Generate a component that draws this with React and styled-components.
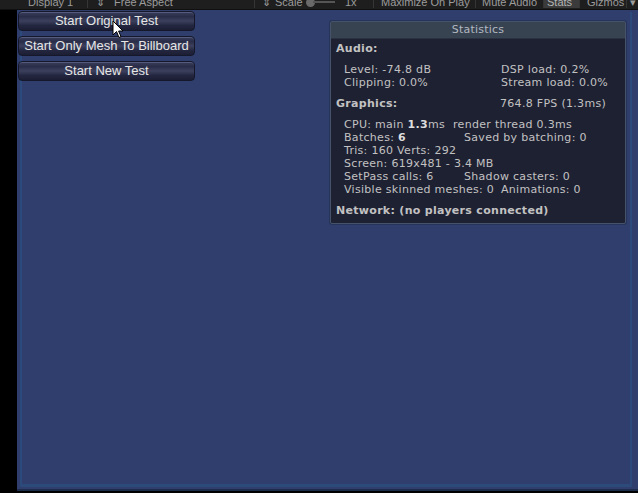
import React from 'react';
import styled, { createGlobalStyle } from 'styled-components';

const GlobalStyle = createGlobalStyle`
  html, body {
    margin: 0;
    padding: 0;
    background: #000;
    width: 638px;
    height: 493px;
    overflow: hidden;
  }
`;

const Screen = styled.div`
  display: flex;
  flex-direction: column;
  width: 638px;
  height: 493px;
  background: #000;
`;

const TopBar = styled.div`
  height: 9px;
  overflow: hidden;
  background: #1e1e1e;
  border-bottom: 1px solid #101010;
  display: flex;
  padding-left: 17px;
  font-family: "Liberation Sans", Arial, sans-serif;
  font-size: 11px;
  color: #9c9c9c;
`;

const ToolItem = styled.div`
  flex: none;
  width: ${p => p.w}px;
  height: 12px;
  margin-top: -4px;
  line-height: 12px;
  padding-left: ${p => p.pad || 0}px;
  box-sizing: border-box;
  white-space: nowrap;
  background: ${p => (p.active ? '#3b3b3b' : 'transparent')};
  color: ${p => (p.active ? '#b4b4b4' : '#9c9c9c')};
  border-right: ${p => (p.sep ? '1px solid #353535' : 'none')};
  display: flex;
  align-items: center;
`;

const Knob = styled.span`
  display: inline-block;
  width: 9px;
  height: 9px;
  border-radius: 50%;
  background: #6a6a6a;
  margin-right: -2px;
`;

const Track = styled.span`
  display: inline-block;
  width: 22px;
  height: 2px;
  background: #555;
`;

const Viewport = styled.div`
  position: relative;
  flex: 1;
  margin-left: 17px;
  margin-bottom: 2px;
  background: #2f3e6d;
  display: flex;
  align-items: flex-start;
  padding: 1px 12px 0 1px;

  &::before {
    content: '';
    position: absolute;
    left: 3px;
    right: 6px;
    top: 2px;
    bottom: 4px;
    border-left: 2px solid #2d4a7c;
    border-right: 2px solid #2d4a7c;
    border-bottom: 3px solid #2c4a7a;
    pointer-events: none;
  }
  &::after {
    content: '';
    position: absolute;
    left: 0;
    right: 0;
    bottom: 0;
    height: 2px;
    background: #1d2c4a;
  }
`;

const ButtonColumn = styled.div`
  position: relative;
  z-index: 1;
  display: flex;
  flex-direction: column;
  gap: 5px;
  width: 177px;
`;

const TestButton = styled.button`
  height: 20px;
  width: 100%;
  padding: 0;
  border: 1px solid #15182a;
  border-radius: 4px;
  background: linear-gradient(
    #3a3e5c 0%,
    #2a2d48 25%,
    #3c405d 50%,
    #23263f 75%,
    #1b1e33 100%
  );
  box-shadow: inset 0 1px 0 rgba(140, 150, 190, 0.35);
  color: #e6e6e6;
  font-family: "Liberation Sans", Arial, sans-serif;
  font-size: 13px;
  line-height: 18px;
  text-align: center;
  cursor: pointer;
`;

const Panel = styled.div`
  position: relative;
  z-index: 1;
  margin-left: auto;
  margin-top: 10px;
  width: 294px;
  border: 1px solid #46526a;
  border-radius: 2px;
  background: #1e2132;
  font-family: "DejaVu Sans", Verdana, sans-serif;
  font-size: 11px;
  letter-spacing: 0.3px;
  color: #c2c2c2;
  box-shadow: 0 0 0 1px #26345a;
`;

const PanelHeader = styled.div`
  height: 16px;
  line-height: 16px;
  text-align: center;
  background: #384352;
  color: #b2b8c0;
  font-size: 11px;
  letter-spacing: 0.2px;
  border-bottom: 1px solid #2a3242;
`;

const PanelBody = styled.div`
  padding: 3px 0 6px 5px;
`;

const Section = styled.div`
  margin-bottom: 8px;
  &:last-child {
    margin-bottom: 0;
  }
`;

const Heading = styled.div`
  display: grid;
  grid-template-columns: 164px 1fr;
  height: 13px;
  line-height: 13px;
  margin-bottom: 8px;
  white-space: nowrap;

  & > span:first-child {
    font-weight: bold;
  }
  &:last-child {
    margin-bottom: 0;
  }
`;

const Row = styled.div`
  display: grid;
  grid-template-columns: ${p => p.split || 300}px 1fr;
  height: 13px;
  line-height: 13px;
  padding-left: 8px;
  white-space: nowrap;
`;

const Strong = styled.b`
  color: #dedede;
`;

const Cursor = styled.svg`
  position: absolute;
  left: 95px;
  top: 10px;
  z-index: 2;
`;

const TOOLS = [
  { label: 'Display 1', w: 71, pad: 11, sep: true },
  { label: '⇕', w: 18, pad: 8 },
  { label: 'Free Aspect', w: 149, pad: 8, sep: true },
  { label: '⇕', w: 15, pad: 7 },
  { label: 'Scale', w: 32, pad: 5 },
  { label: 'slider', w: 38, pad: 4 },
  { label: '1x', w: 34, pad: 5, sep: true },
  { label: 'Maximize On Play', w: 102, pad: 7, sep: true },
  { label: 'Mute Audio', w: 68, pad: 6, sep: true },
  { label: 'Stats', w: 36, pad: 3, active: true, sep: true },
  { label: 'Gizmos', w: 47, pad: 7, sep: true },
  { label: '▾', w: 11, pad: 3 },
];

const BUTTONS = ['Start Original Test', 'Start Only Mesh To Billboard', 'Start New Test'];

const App = () => (
  <>
    <GlobalStyle />
    <Screen>
      <TopBar>
        {TOOLS.map((t, i) => (
          <ToolItem key={i} w={t.w} pad={t.pad} sep={t.sep} active={t.active}>
            {t.label === 'slider' ? (
              <>
                <Knob />
                <Track />
              </>
            ) : (
              t.label
            )}
          </ToolItem>
        ))}
      </TopBar>
      <Viewport>
        <ButtonColumn>
          {BUTTONS.map(b => (
            <TestButton key={b}>{b}</TestButton>
          ))}
        </ButtonColumn>

        <Panel>
          <PanelHeader>Statistics</PanelHeader>
          <PanelBody>
            <Section>
              <Heading>
                <span>Audio:</span>
              </Heading>
              <Row split={157}>
                <span>Level: -74.8 dB</span>
                <span>DSP load: 0.2%</span>
              </Row>
              <Row split={157}>
                <span>Clipping: 0.0%</span>
                <span>Stream load: 0.0%</span>
              </Row>
            </Section>
            <Section>
              <Heading>
                <span>Graphics:</span>
                <span>764.8 FPS (1.3ms)</span>
              </Heading>
              <Row split={109}>
                <span>
                  CPU: main <Strong>1.3</Strong>ms
                </span>
                <span>render thread 0.3ms</span>
              </Row>
              <Row split={120}>
                <span>
                  Batches: <Strong>6</Strong>
                </span>
                <span>Saved by batching: 0</span>
              </Row>
              <Row>
                <span>Tris: 160 Verts: 292</span>
              </Row>
              <Row>
                <span>Screen: 619x481 - 3.4 MB</span>
              </Row>
              <Row split={120}>
                <span>SetPass calls: 6</span>
                <span>Shadow casters: 0</span>
              </Row>
              <Row split={157}>
                <span>Visible skinned meshes: 0</span>
                <span>Animations: 0</span>
              </Row>
            </Section>
            <Section>
              <Heading>
                <span>Network: (no players connected)</span>
              </Heading>
            </Section>
          </PanelBody>
        </Panel>

        <Cursor width="12" height="19" viewBox="0 0 12 19">
          <path
            d="M1 1 L1 15 L4.5 11.5 L7 17.5 L9 16.6 L6.6 11 L11 11 Z"
            fill="#ffffff"
            stroke="#000000"
            strokeWidth="1"
            strokeLinejoin="round"
          />
        </Cursor>
      </Viewport>
    </Screen>
  </>
);

export default App;
